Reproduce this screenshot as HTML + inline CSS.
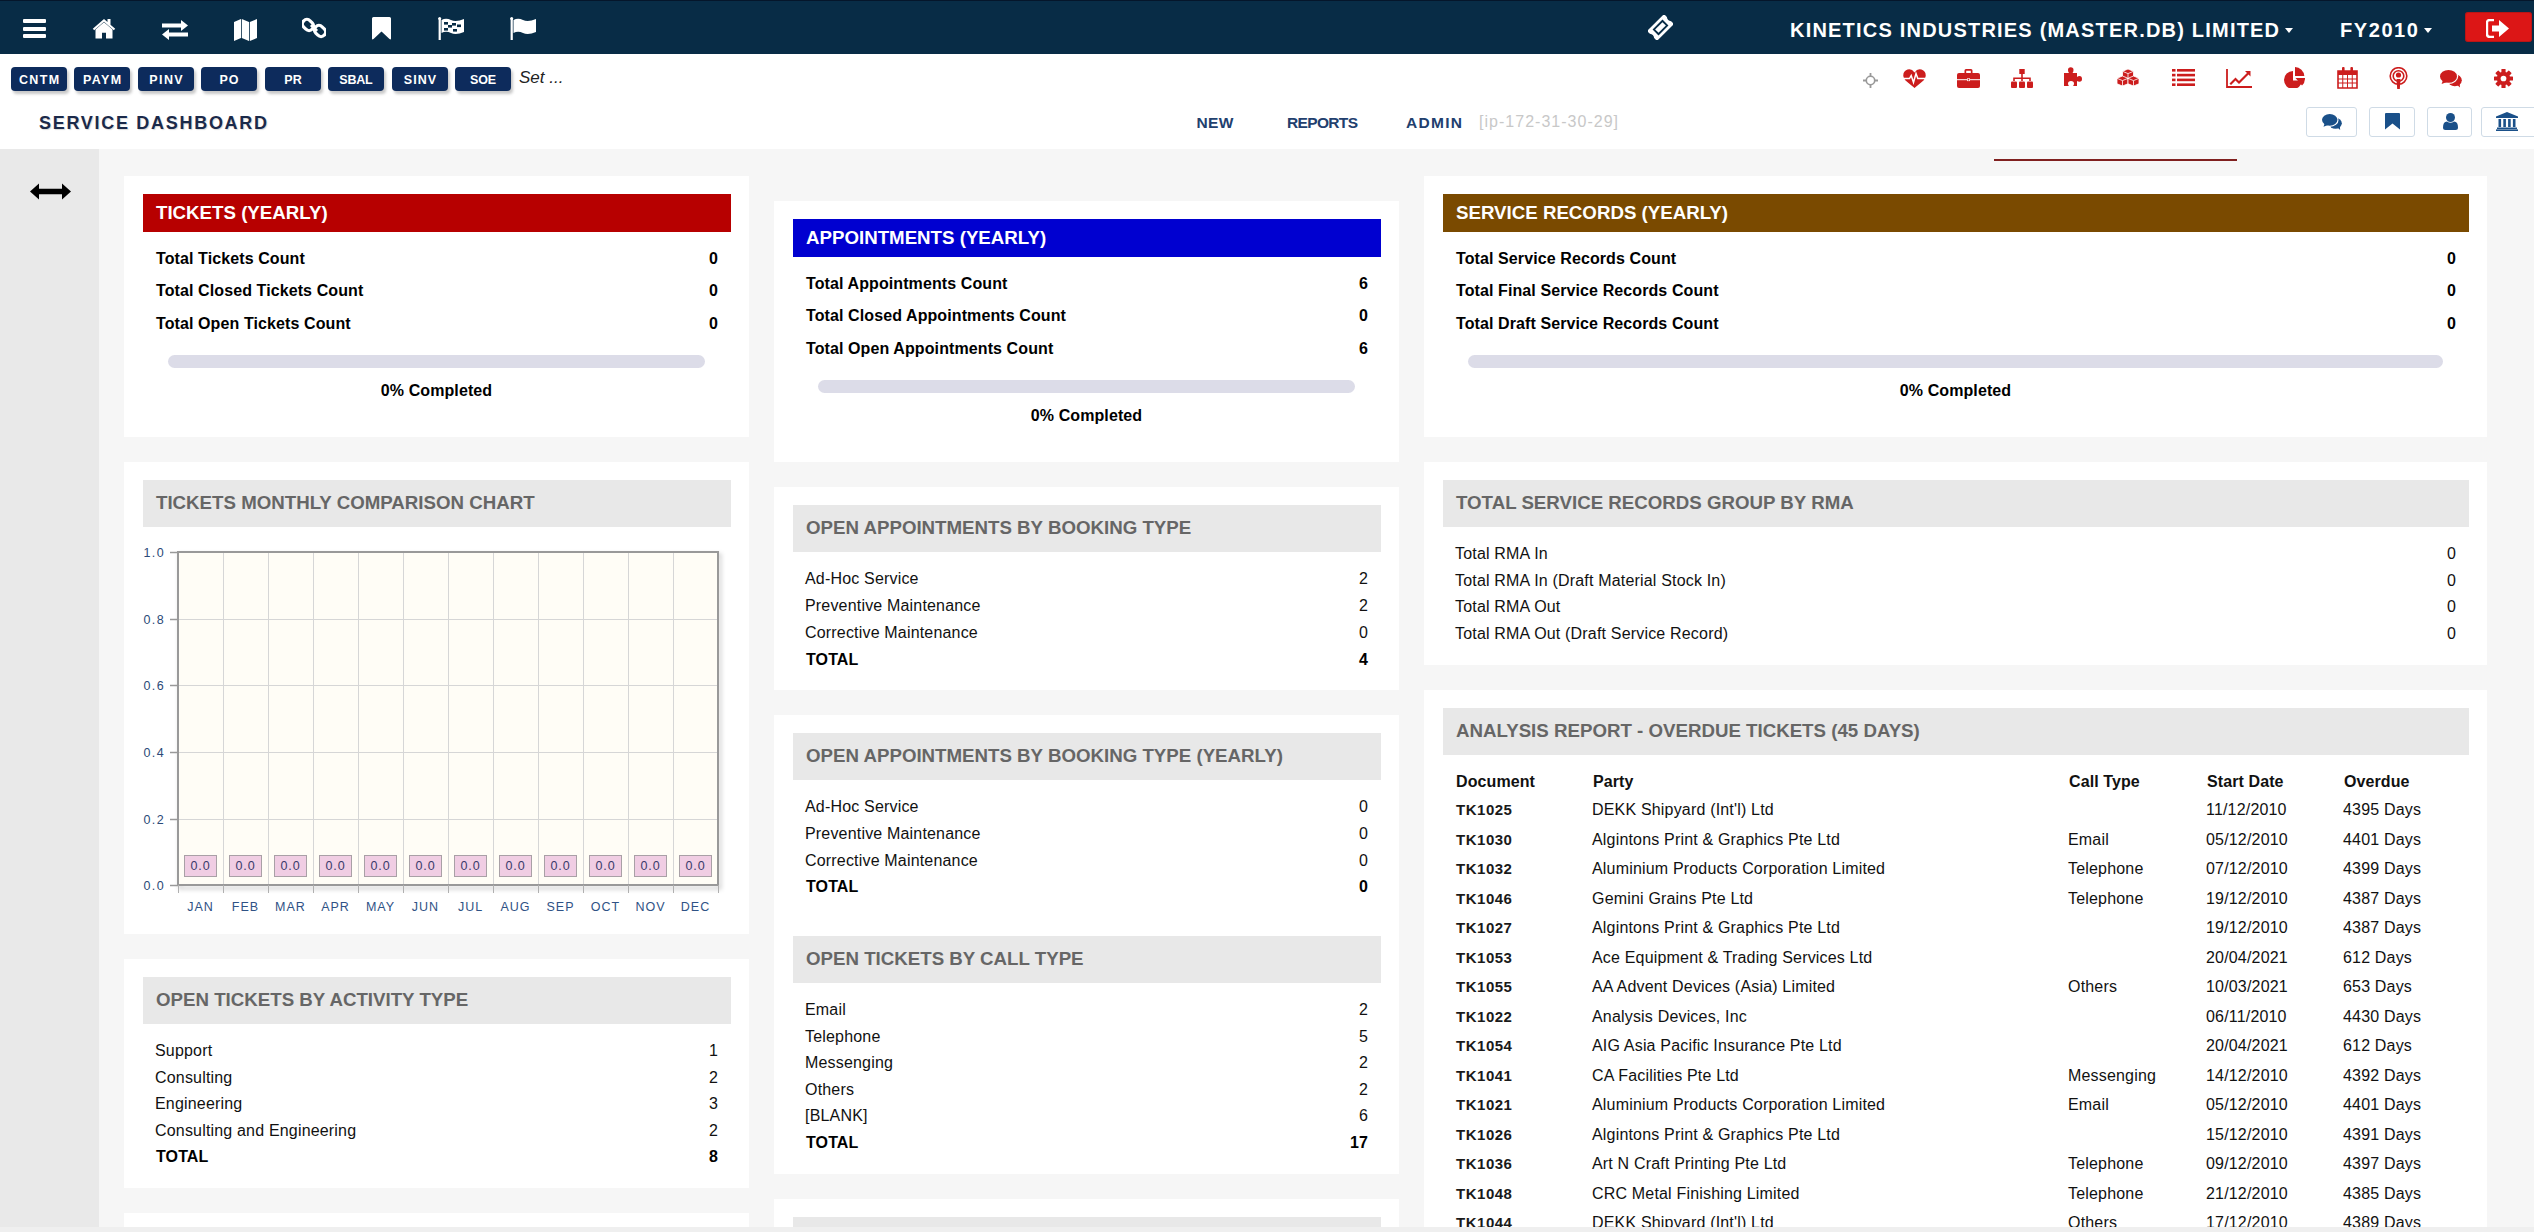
<!DOCTYPE html>
<html><head><meta charset="utf-8"><title>Service Dashboard</title>
<style>
html,body{margin:0;padding:0;width:2534px;height:1232px;overflow:hidden;background:#f5f5f5;}
body{position:relative;font-family:"Liberation Sans", sans-serif;}
.r{position:absolute;}
.t{position:absolute;white-space:nowrap;}
.btn{position:absolute;width:56px;height:24px;background:#0d2b5c;border-radius:4px;color:#fff;font-weight:bold;font-size:12.5px;line-height:26px;text-align:center;letter-spacing:0.8px;box-shadow:2px 3px 3px rgba(0,0,0,0.22);}
</style></head><body>
<div class="r" style="left:0px;top:0px;width:2534px;height:54px;background:#082c46;"></div>
<div class="r" style="left:0px;top:0px;width:2534px;height:1px;background:#05162b;"></div>
<div class="r" style="left:0px;top:54px;width:2534px;height:95px;background:#fff;"></div>
<div class="r" style="left:0px;top:149px;width:2534px;height:1083px;background:#f6f6f6;"></div>
<div class="r" style="left:0px;top:149px;width:99px;height:1083px;background:#e9e9e9;"></div>
<div class="r" style="left:23px;top:19px;width:23px;height:4px;background:#fff;border-radius:1px;"></div>
<div class="r" style="left:23px;top:26.5px;width:23px;height:4px;background:#fff;border-radius:1px;"></div>
<div class="r" style="left:23px;top:34px;width:23px;height:4px;background:#fff;border-radius:1px;"></div>
<svg class="r" style="left:92px;top:18px;" width="24" height="21" viewBox="0 0 24 21"><path d="M12 1 L0.8 10.8 L2.2 12.3 L12 3.7 L21.8 12.3 L23.2 10.8 L18.5 6.7 L18.5 1 L15.5 1 L15.5 4 Z" fill="#fff"/><path d="M3.5 11.5 L12 4.2 L20.5 11.5 L20.5 20.5 L14 20.5 L14 14.8 L10 14.8 L10 20.5 L3.5 20.5 Z" fill="#fff"/></svg>
<svg class="r" style="left:162px;top:20px;" width="26" height="20" viewBox="0 0 26 20"><path d="M0 3.5 H19 V0 L26 5.5 L19 11 V7.5 H0 Z" fill="#fff"/><path d="M26 12.5 H7 V9 L0 14.5 L7 20 V16.5 H26 Z" fill="#fff"/></svg>
<svg class="r" style="left:234px;top:19px;" width="23" height="22" viewBox="0 0 23 22"><path d="M0 3 L7 0 V19 L0 22 Z M7.8 0 L15 3 V22 L7.8 19 Z M15.8 3 L23 0 V19 L15.8 22 Z" fill="#fff"/></svg>
<svg class="r" style="left:302px;top:16px;" width="24" height="24" viewBox="0 0 24 24"><g fill="none" stroke="#fff" stroke-width="3.2"><rect x="1.5" y="3" width="9" height="12" rx="4.5" transform="rotate(-45 6 9)"/><rect x="13.5" y="9" width="9" height="12" rx="4.5" transform="rotate(-45 18 15)"/></g><path d="M9 9 L15 15" stroke="#fff" stroke-width="3"/></svg>
<svg class="r" style="left:372px;top:17px;" width="19" height="23" viewBox="0 0 19 23"><path d="M1.5 0 H17.5 Q19 0 19 1.5 V21.5 Q19 23 17.5 22 L9.5 14.5 L1.5 22 Q0 23 0 21.5 V1.5 Q0 0 1.5 0 Z" fill="#fff"/></svg>
<svg class="r" style="left:438px;top:17px;" width="26" height="23" viewBox="0 0 26 23"><rect x="0.6" y="1" width="2.2" height="22" fill="#fff"/><circle cx="1.7" cy="1.5" r="1.5" fill="#fff"/><path d="M3.5 3 Q8 0.5 13 3 Q18 5.5 26 2 V15 Q18 18.5 13 16 Q8 13.5 3.5 16 Z" fill="#fff"/><g fill="#082c46"><rect x="6" y="5" width="4" height="2.6"/><rect x="14" y="6" width="4" height="2.6"/><rect x="10" y="8" width="4" height="2.6"/><rect x="19" y="7.5" width="4" height="2.6"/><rect x="6" y="11" width="4" height="2.6"/><rect x="15" y="12" width="4" height="2.6"/></g></svg>
<svg class="r" style="left:510px;top:17px;" width="26" height="23" viewBox="0 0 26 23"><rect x="0.6" y="1" width="2.2" height="22" fill="#fff"/><circle cx="1.7" cy="1.5" r="1.5" fill="#fff"/><path d="M3.5 3 Q8 0.5 13 3 Q18 5.5 26 2 V15 Q18 18.5 13 16 Q8 13.5 3.5 16 Z" fill="#fff"/></svg>
<svg class="r" style="left:1648px;top:15px;" width="25" height="25" viewBox="0 0 25 25"><g transform="rotate(-45 12.5 12.5)"><path d="M0.5 5.5 H24.5 V9.5 Q22.3 12.5 24.5 15.5 V19.5 H0.5 V15.5 Q2.7 12.5 0.5 9.5 Z" fill="#fff"/><rect x="5.5" y="8.3" width="14" height="8.4" fill="#082c46"/><rect x="7.3" y="10.1" width="10.4" height="4.8" fill="#fff"/></g></svg>
<div class="t" style="top:19.87px;font-size:20px;line-height:20px;font-weight:bold;color:#fff;letter-spacing:1.203px;left:1790px;">KINETICS INDUSTRIES (MASTER.DB) LIMITED</div>
<svg class="r" style="left:2285px;top:28px;" width="8" height="5" viewBox="0 0 8 5"><path d="M0 0 H8 L4 5 Z" fill="#fff"/></svg>
<div class="t" style="top:19.87px;font-size:20px;line-height:20px;font-weight:bold;color:#fff;letter-spacing:1.58px;left:2340px;">FY2010</div>
<svg class="r" style="left:2424px;top:28px;" width="8" height="5" viewBox="0 0 8 5"><path d="M0 0 H8 L4 5 Z" fill="#fff"/></svg>
<div class="r" style="left:2465px;top:12px;width:67px;height:30px;background:#dc1616;border-radius:3px;box-shadow:0 0 0 1px rgba(120,20,20,0.35) inset;"></div>
<svg class="r" style="left:2486px;top:19px;" width="24" height="19" viewBox="0 0 24 19"><path d="M8 1 H4 Q1 1 1 4 V15 Q1 18 4 18 H8" fill="none" stroke="#fff" stroke-width="2.4"/><path d="M6 6.5 H13 V1 L23 9.5 L13 18 V12.5 H6 Z" fill="#fff"/></svg>
<div class="btn" style="left:11px;top:67px;letter-spacing:1.37px;text-indent:1.37px;">CNTM</div>
<div class="btn" style="left:74px;top:67px;letter-spacing:1.37px;text-indent:1.37px;">PAYM</div>
<div class="btn" style="left:138px;top:67px;letter-spacing:1.40px;text-indent:1.40px;">PINV</div>
<div class="btn" style="left:201px;top:67px;letter-spacing:1.10px;text-indent:1.10px;">PO</div>
<div class="btn" style="left:265px;top:67px;letter-spacing:0.00px;text-indent:0.00px;">PR</div>
<div class="btn" style="left:328px;top:67px;letter-spacing:-0.23px;text-indent:-0.23px;">SBAL</div>
<div class="btn" style="left:392px;top:67px;letter-spacing:1.03px;text-indent:1.03px;">SINV</div>
<div class="btn" style="left:455px;top:67px;letter-spacing:-0.10px;text-indent:-0.10px;">SOE</div>
<div class="t" style="top:68.61px;font-size:17px;line-height:17px;font-weight:normal;color:#222;left:519px;font-style:italic;">Set ...</div>
<svg class="r" style="left:1863px;top:73px;" width="15" height="15" viewBox="0 0 15 15"><circle cx="7.5" cy="7.5" r="4.2" fill="none" stroke="#999" stroke-width="1.6"/><path d="M7.5 0 V4 M7.5 11 V15 M0 7.5 H4 M11 7.5 H15" stroke="#999" stroke-width="1.8"/></svg>
<svg class="r" style="left:1903px;top:69px;" width="23" height="19" viewBox="0 0 23 19"><path d="M11.5 3.5 Q8.5 -1 4.5 0.5 Q0 2 0.3 7 Q0.6 9.5 2.5 11.5 L11.5 19 L20.5 11.5 Q22.4 9.5 22.7 7 Q23 2 18.5 0.5 Q14.5 -1 11.5 3.5 Z" fill="#cc1d1d"/><path d="M0 9.5 H6.5 L8.2 6.5 L10.5 13.5 L13 4.5 L14.8 9.5 H23" fill="none" stroke="#fff" stroke-width="1.5"/></svg>
<svg class="r" style="left:1957px;top:69px;" width="23" height="19" viewBox="0 0 23 19"><path d="M7.5 4 V1.5 Q7.5 0 9 0 H14 Q15.5 0 15.5 1.5 V4 H13.8 V1.8 H9.2 V4 Z" fill="#cc1d1d"/><rect x="0" y="4" width="23" height="15" rx="2" fill="#cc1d1d"/><rect x="0" y="10.2" width="23" height="1" fill="#fff"/><rect x="10" y="9.3" width="3" height="2.8" fill="#fff"/><rect x="10.8" y="9.9" width="1.4" height="1.6" fill="#cc1d1d"/></svg>
<svg class="r" style="left:2011px;top:69px;" width="22" height="19" viewBox="0 0 22 19"><rect x="8.3" y="0" width="5.4" height="5" fill="#cc1d1d"/><path d="M11 5 V8.5 M3 12 V9.3 H19 V12 M11 8.5 V12" stroke="#cc1d1d" stroke-width="1.6" fill="none"/><rect x="0" y="12.5" width="6" height="6.5" rx="1" fill="#cc1d1d"/><rect x="8" y="12.5" width="6" height="6.5" rx="1" fill="#cc1d1d"/><rect x="16" y="12.5" width="6" height="6.5" rx="1" fill="#cc1d1d"/></svg>
<svg class="r" style="left:2064px;top:67px;" width="21" height="19" viewBox="0 0 21 19"><path d="M0 6 H5 Q4 5 4 3 Q4 0.3 6.8 0.3 Q9.5 0.3 9.5 3 Q9.5 5 8.5 6 H13 V10 Q14 9 15.5 9 Q18 9 18 12 Q18 14.8 15.5 14.8 Q14 14.8 13 14 V19 H9 Q10 18 10 16.5 Q10 14 7 14 Q4 14 4 16.5 Q4 18 5 19 H0 Z" fill="#cc1d1d"/></svg>
<svg class="r" style="left:2117px;top:69px;" width="22" height="17" viewBox="0 0 22 17"><g fill="#cc1d1d" stroke="#fff" stroke-width="0.8"><path d="M11 0 L16.5 2.3 V7.8 L11 10 L5.5 7.8 V2.3 Z"/><path d="M5.5 7 L11 9.3 V14.8 L5.5 17 L0 14.8 V9.3 Z"/><path d="M16.5 7 L22 9.3 V14.8 L16.5 17 L11 14.8 V9.3 Z"/></g><g fill="none" stroke="#fff" stroke-width="0.8"><path d="M5.5 2.3 L11 4.6 L16.5 2.3 M11 4.6 V10"/><path d="M0 9.3 L5.5 11.6 L11 9.3 M5.5 11.6 V17"/><path d="M11 9.3 L16.5 11.6 L22 9.3 M16.5 11.6 V17"/></g></svg>
<svg class="r" style="left:2172px;top:69px;" width="23" height="17" viewBox="0 0 23 17"><g fill="#cc1d1d"><rect x="0" y="0" width="3.5" height="2.6"/><rect x="5" y="0" width="18" height="2.6"/><rect x="0" y="4.8" width="3.5" height="2.6"/><rect x="5" y="4.8" width="18" height="2.6"/><rect x="0" y="9.6" width="3.5" height="2.6"/><rect x="5" y="9.6" width="18" height="2.6"/><rect x="0" y="14.4" width="3.5" height="2.6"/><rect x="5" y="14.4" width="18" height="2.6"/></g></svg>
<svg class="r" style="left:2226px;top:69px;" width="26" height="19" viewBox="0 0 26 19"><path d="M1 0 V18 H26" fill="none" stroke="#cc1d1d" stroke-width="1.8"/><path d="M3.5 14.5 L9.5 8.5 L13 12 L21 4 L19 2 H24.5 V7.5 L22.5 5.5 L13 15 L9.5 11.5 L5 16 Z" fill="#cc1d1d"/></svg>
<svg class="r" style="left:2283px;top:67px;" width="22" height="21" viewBox="0 0 22 21"><path d="M10 4 A9 9 0 1 0 19 13.5 H10 Z" fill="#cc1d1d"/><path d="M12 0 A9.5 9.5 0 0 1 21.3 9 H12 Z" fill="#cc1d1d"/><path d="M12.5 11 H22 A9.8 9.8 0 0 1 19 18.5 Z" fill="#cc1d1d"/></svg>
<svg class="r" style="left:2337px;top:67px;" width="21" height="22" viewBox="0 0 21 22"><path d="M1 4 H20 V21 H1 Z" fill="none" stroke="#cc1d1d" stroke-width="1.6"/><rect x="1" y="4" width="19" height="4" fill="#cc1d1d"/><rect x="5" y="0" width="2.6" height="5" rx="1" fill="#cc1d1d"/><rect x="13.4" y="0" width="2.6" height="5" rx="1" fill="#cc1d1d"/><g stroke="#cc1d1d" stroke-width="1"><path d="M1 12 H20 M1 16 H20 M5.75 8 V21 M10.5 8 V21 M15.25 8 V21"/></g></svg>
<svg class="r" style="left:2389px;top:67px;" width="19" height="22" viewBox="0 0 19 22"><circle cx="9.5" cy="9" r="8.3" fill="none" stroke="#cc1d1d" stroke-width="1.6"/><circle cx="9.5" cy="9" r="5.3" fill="none" stroke="#cc1d1d" stroke-width="1.6"/><circle cx="9.5" cy="8" r="2.6" fill="#cc1d1d"/><path d="M7.5 12 H11.5 L10.8 22 H8.2 Z" fill="#cc1d1d"/></svg>
<svg class="r" style="left:2440px;top:70px;" width="22" height="17.5" viewBox="0 0 22 17.5"><ellipse cx="14.8" cy="10.2" rx="7" ry="6" fill="#cc1d1d"/><path d="M16 14 L20 17.5 L19.5 12 Z" fill="#cc1d1d"/><ellipse cx="8.5" cy="6.5" rx="9.7" ry="7.5" fill="#fff"/><ellipse cx="8.5" cy="6.4" rx="8.5" ry="6.4" fill="#cc1d1d"/><path d="M3 10 L1.6 14 L7.5 11.8 Z" fill="#cc1d1d"/></svg>
<svg class="r" style="left:2494px;top:69px;" width="19" height="19" viewBox="0 0 20 20"><g transform="translate(10 10)" fill="#cc1d1d"><circle r="7"/><rect x="-2.2" y="-10" width="4.4" height="5" rx="0.6" transform="rotate(0)"/><rect x="-2.2" y="-10" width="4.4" height="5" rx="0.6" transform="rotate(45)"/><rect x="-2.2" y="-10" width="4.4" height="5" rx="0.6" transform="rotate(90)"/><rect x="-2.2" y="-10" width="4.4" height="5" rx="0.6" transform="rotate(135)"/><rect x="-2.2" y="-10" width="4.4" height="5" rx="0.6" transform="rotate(180)"/><rect x="-2.2" y="-10" width="4.4" height="5" rx="0.6" transform="rotate(225)"/><rect x="-2.2" y="-10" width="4.4" height="5" rx="0.6" transform="rotate(270)"/><rect x="-2.2" y="-10" width="4.4" height="5" rx="0.6" transform="rotate(315)"/></g><circle cx="10" cy="10" r="3" fill="#fff"/></svg>
<div class="t" style="top:114.26px;font-size:18px;line-height:18px;font-weight:bold;color:#1b2a4a;letter-spacing:1.706px;left:39px;text-shadow:1px 1px 1px rgba(0,0,0,0.15);">SERVICE DASHBOARD</div>
<div class="t" style="top:114.88px;font-size:15.5px;line-height:15.5px;font-weight:bold;color:#22406e;letter-spacing:0.4px;left:1196.5px;">NEW</div>
<div class="t" style="top:114.88px;font-size:15.5px;line-height:15.5px;font-weight:bold;color:#22406e;letter-spacing:-0.65px;left:1287px;">REPORTS</div>
<div class="t" style="top:114.88px;font-size:15.5px;line-height:15.5px;font-weight:bold;color:#22406e;letter-spacing:1.3px;left:1406px;">ADMIN</div>
<div class="t" style="top:114.46px;font-size:16px;line-height:16px;font-weight:normal;color:#c8c8c8;letter-spacing:1.019px;left:1479px;">[ip-172-31-30-29]</div>
<div class="r" style="left:2306px;top:107px;width:51px;height:30px;background:#fff;border:1px solid #cfdbe6;border-radius:3px;box-sizing:border-box;"></div>
<div class="r" style="left:2369px;top:107px;width:46px;height:30px;background:#fff;border:1px solid #cfdbe6;border-radius:3px;box-sizing:border-box;"></div>
<div class="r" style="left:2427px;top:107px;width:45px;height:30px;background:#fff;border:1px solid #cfdbe6;border-radius:3px;box-sizing:border-box;"></div>
<div class="r" style="left:2481px;top:107px;width:60px;height:30px;background:#fff;border:1px solid #cfdbe6;border-radius:3px;box-sizing:border-box;"></div>
<svg class="r" style="left:2322px;top:114px;" width="20" height="16" viewBox="0 0 22 17.5"><ellipse cx="14.8" cy="10.2" rx="7" ry="6" fill="#1a5089"/><path d="M16 14 L20 17.5 L19.5 12 Z" fill="#1a5089"/><ellipse cx="8.5" cy="6.5" rx="9.7" ry="7.5" fill="#fff"/><ellipse cx="8.5" cy="6.4" rx="8.5" ry="6.4" fill="#1a5089"/><path d="M3 10 L1.6 14 L7.5 11.8 Z" fill="#1a5089"/></svg>
<svg class="r" style="left:2385px;top:113px;" width="15" height="17" viewBox="0 0 15 17"><path d="M1 0 H14 Q15 0 15 1 V16.5 L7.5 10.5 L0 16.5 V1 Q0 0 1 0 Z" fill="#1a5089"/></svg>
<svg class="r" style="left:2443px;top:113px;" width="15" height="17" viewBox="0 0 15 17"><circle cx="7.5" cy="4.5" r="4.5" fill="#1a5089"/><path d="M0 14.5 Q0 8.5 4 8.5 Q7.5 11 11 8.5 Q15 8.5 15 14.5 Q15 17 12.5 17 H2.5 Q0 17 0 14.5 Z" fill="#1a5089"/></svg>
<svg class="r" style="left:2496px;top:112px;" width="22" height="19" viewBox="0 0 22 19"><path d="M11 0 L22 4.5 V6 H0 V4.5 Z" fill="#1a5089"/><g fill="#1a5089"><rect x="2.5" y="7" width="2.6" height="8"/><rect x="7.3" y="7" width="2.6" height="8"/><rect x="12.1" y="7" width="2.6" height="8"/><rect x="16.9" y="7" width="2.6" height="8"/><rect x="1" y="15.5" width="20" height="1.6"/><rect x="0" y="17.4" width="22" height="1.6"/></g></svg>
<div class="r" style="left:1994px;top:158.5px;width:243px;height:2px;background:#80201f;"></div>
<svg class="r" style="left:30px;top:183px;" width="41" height="17" viewBox="0 0 41 17"><path d="M0 8.5 L9 0.5 V5.7 H32 V0.5 L41 8.5 L32 16.5 V11.3 H9 V16.5 Z" fill="#000"/></svg>
<div class="r" style="left:124px;top:176px;width:625px;height:261px;background:#fff;"></div>
<div class="r" style="left:143px;top:194px;width:588px;height:38px;background:#b70000;"></div>
<div class="t" style="top:204.17px;font-size:18.7px;line-height:18.7px;font-weight:bold;color:#fff;left:156px;">TICKETS (YEARLY)</div>
<div class="t" style="top:251.46px;font-size:16px;line-height:16px;font-weight:bold;color:#000;letter-spacing:0.1px;left:156px;">Total Tickets Count</div>
<div class="t" style="top:251.46px;font-size:16px;line-height:16px;font-weight:bold;color:#000;letter-spacing:0.1px;right:1816px;">0</div>
<div class="t" style="top:283.46px;font-size:16px;line-height:16px;font-weight:bold;color:#000;letter-spacing:0.1px;left:156px;">Total Closed Tickets Count</div>
<div class="t" style="top:283.46px;font-size:16px;line-height:16px;font-weight:bold;color:#000;letter-spacing:0.1px;right:1816px;">0</div>
<div class="t" style="top:316.46px;font-size:16px;line-height:16px;font-weight:bold;color:#000;letter-spacing:0.1px;left:156px;">Total Open Tickets Count</div>
<div class="t" style="top:316.46px;font-size:16px;line-height:16px;font-weight:bold;color:#000;letter-spacing:0.1px;right:1816px;">0</div>
<div class="r" style="left:168px;top:355px;width:537px;height:13px;background:#dcdce8;border-radius:7px;"></div>
<div class="t" style="top:383.46px;font-size:16px;line-height:16px;font-weight:bold;color:#000;letter-spacing:0.1px;left:36.5px;width:800px;text-align:center;">0% Completed</div>
<div class="r" style="left:774px;top:201px;width:625px;height:261px;background:#fff;"></div>
<div class="r" style="left:793px;top:219px;width:588px;height:38px;background:#0000d0;"></div>
<div class="t" style="top:229.17px;font-size:18.7px;line-height:18.7px;font-weight:bold;color:#fff;left:806px;">APPOINTMENTS (YEARLY)</div>
<div class="t" style="top:276.46px;font-size:16px;line-height:16px;font-weight:bold;color:#000;letter-spacing:0.1px;left:806px;">Total Appointments Count</div>
<div class="t" style="top:276.46px;font-size:16px;line-height:16px;font-weight:bold;color:#000;letter-spacing:0.1px;right:1166px;">6</div>
<div class="t" style="top:308.46px;font-size:16px;line-height:16px;font-weight:bold;color:#000;letter-spacing:0.1px;left:806px;">Total Closed Appointments Count</div>
<div class="t" style="top:308.46px;font-size:16px;line-height:16px;font-weight:bold;color:#000;letter-spacing:0.1px;right:1166px;">0</div>
<div class="t" style="top:341.46px;font-size:16px;line-height:16px;font-weight:bold;color:#000;letter-spacing:0.1px;left:806px;">Total Open Appointments Count</div>
<div class="t" style="top:341.46px;font-size:16px;line-height:16px;font-weight:bold;color:#000;letter-spacing:0.1px;right:1166px;">6</div>
<div class="r" style="left:818px;top:380px;width:537px;height:13px;background:#dcdce8;border-radius:7px;"></div>
<div class="t" style="top:408.46px;font-size:16px;line-height:16px;font-weight:bold;color:#000;letter-spacing:0.1px;left:686.5px;width:800px;text-align:center;">0% Completed</div>
<div class="r" style="left:1424px;top:176px;width:1063px;height:261px;background:#fff;"></div>
<div class="r" style="left:1443px;top:194px;width:1026px;height:38px;background:#7a4a00;"></div>
<div class="t" style="top:204.17px;font-size:18.7px;line-height:18.7px;font-weight:bold;color:#fff;left:1456px;">SERVICE RECORDS (YEARLY)</div>
<div class="t" style="top:251.46px;font-size:16px;line-height:16px;font-weight:bold;color:#000;letter-spacing:0.1px;left:1456px;">Total Service Records Count</div>
<div class="t" style="top:251.46px;font-size:16px;line-height:16px;font-weight:bold;color:#000;letter-spacing:0.1px;right:78px;">0</div>
<div class="t" style="top:283.46px;font-size:16px;line-height:16px;font-weight:bold;color:#000;letter-spacing:0.1px;left:1456px;">Total Final Service Records Count</div>
<div class="t" style="top:283.46px;font-size:16px;line-height:16px;font-weight:bold;color:#000;letter-spacing:0.1px;right:78px;">0</div>
<div class="t" style="top:316.46px;font-size:16px;line-height:16px;font-weight:bold;color:#000;letter-spacing:0.1px;left:1456px;">Total Draft Service Records Count</div>
<div class="t" style="top:316.46px;font-size:16px;line-height:16px;font-weight:bold;color:#000;letter-spacing:0.1px;right:78px;">0</div>
<div class="r" style="left:1468px;top:355px;width:975px;height:13px;background:#dcdce8;border-radius:7px;"></div>
<div class="t" style="top:383.46px;font-size:16px;line-height:16px;font-weight:bold;color:#000;letter-spacing:0.1px;left:1555.5px;width:800px;text-align:center;">0% Completed</div>
<div class="r" style="left:124px;top:462px;width:625px;height:472px;background:#fff;"></div>
<div class="r" style="left:143px;top:480px;width:588px;height:47px;background:#e8e8e8;"></div>
<div class="t" style="top:494.17px;font-size:18.7px;line-height:18.7px;font-weight:bold;color:#666;left:156px;">TICKETS MONTHLY COMPARISON CHART</div>
<svg class="r" style="left:130px;top:540px" width="600" height="380"><defs><filter id="sh" x="-5%" y="-5%" width="115%" height="115%"><feGaussianBlur stdDeviation="2"/></filter></defs><rect x="50" y="15" width="540" height="333" fill="none" stroke="#000" stroke-opacity="0.18" stroke-width="3" filter="url(#sh)"/><rect x="48" y="12" width="540" height="333" fill="#fffdf6"/><line x1="93.5" y1="12" x2="93.5" y2="345" stroke="#d6d6d6" stroke-width="1"/><line x1="138.5" y1="12" x2="138.5" y2="345" stroke="#d6d6d6" stroke-width="1"/><line x1="183.5" y1="12" x2="183.5" y2="345" stroke="#d6d6d6" stroke-width="1"/><line x1="228.5" y1="12" x2="228.5" y2="345" stroke="#d6d6d6" stroke-width="1"/><line x1="273.5" y1="12" x2="273.5" y2="345" stroke="#d6d6d6" stroke-width="1"/><line x1="318.5" y1="12" x2="318.5" y2="345" stroke="#d6d6d6" stroke-width="1"/><line x1="363.5" y1="12" x2="363.5" y2="345" stroke="#d6d6d6" stroke-width="1"/><line x1="408.5" y1="12" x2="408.5" y2="345" stroke="#d6d6d6" stroke-width="1"/><line x1="453.5" y1="12" x2="453.5" y2="345" stroke="#d6d6d6" stroke-width="1"/><line x1="498.5" y1="12" x2="498.5" y2="345" stroke="#d6d6d6" stroke-width="1"/><line x1="543.5" y1="12" x2="543.5" y2="345" stroke="#d6d6d6" stroke-width="1"/><line x1="48" y1="79.5" x2="588" y2="79.5" stroke="#d6d6d6" stroke-width="1"/><line x1="48" y1="145.5" x2="588" y2="145.5" stroke="#d6d6d6" stroke-width="1"/><line x1="48" y1="212.5" x2="588" y2="212.5" stroke="#d6d6d6" stroke-width="1"/><line x1="48" y1="279.5" x2="588" y2="279.5" stroke="#d6d6d6" stroke-width="1"/><rect x="48" y="12" width="540" height="333" fill="none" stroke="#999" stroke-width="2"/><line x1="40" y1="12.5" x2="48" y2="12.5" stroke="#999" stroke-width="1.5"/><line x1="40" y1="79.5" x2="48" y2="79.5" stroke="#999" stroke-width="1.5"/><line x1="40" y1="145.5" x2="48" y2="145.5" stroke="#999" stroke-width="1.5"/><line x1="40" y1="212.5" x2="48" y2="212.5" stroke="#999" stroke-width="1.5"/><line x1="40" y1="279.5" x2="48" y2="279.5" stroke="#999" stroke-width="1.5"/><line x1="40" y1="345.5" x2="48" y2="345.5" stroke="#999" stroke-width="1.5"/><line x1="48.5" y1="345" x2="48.5" y2="353" stroke="#b0b0b0" stroke-width="1"/><line x1="93.5" y1="345" x2="93.5" y2="353" stroke="#b0b0b0" stroke-width="1"/><line x1="138.5" y1="345" x2="138.5" y2="353" stroke="#b0b0b0" stroke-width="1"/><line x1="183.5" y1="345" x2="183.5" y2="353" stroke="#b0b0b0" stroke-width="1"/><line x1="228.5" y1="345" x2="228.5" y2="353" stroke="#b0b0b0" stroke-width="1"/><line x1="273.5" y1="345" x2="273.5" y2="353" stroke="#b0b0b0" stroke-width="1"/><line x1="318.5" y1="345" x2="318.5" y2="353" stroke="#b0b0b0" stroke-width="1"/><line x1="363.5" y1="345" x2="363.5" y2="353" stroke="#b0b0b0" stroke-width="1"/><line x1="408.5" y1="345" x2="408.5" y2="353" stroke="#b0b0b0" stroke-width="1"/><line x1="453.5" y1="345" x2="453.5" y2="353" stroke="#b0b0b0" stroke-width="1"/><line x1="498.5" y1="345" x2="498.5" y2="353" stroke="#b0b0b0" stroke-width="1"/><line x1="543.5" y1="345" x2="543.5" y2="353" stroke="#b0b0b0" stroke-width="1"/><line x1="588.5" y1="345" x2="588.5" y2="353" stroke="#b0b0b0" stroke-width="1"/><rect x="54.5" y="315.5" width="32" height="21" fill="#f0cde3" stroke="#a9a0a6" stroke-width="1"/><rect x="99.5" y="315.5" width="32" height="21" fill="#f0cde3" stroke="#a9a0a6" stroke-width="1"/><rect x="144.5" y="315.5" width="32" height="21" fill="#f0cde3" stroke="#a9a0a6" stroke-width="1"/><rect x="189.5" y="315.5" width="32" height="21" fill="#f0cde3" stroke="#a9a0a6" stroke-width="1"/><rect x="234.5" y="315.5" width="32" height="21" fill="#f0cde3" stroke="#a9a0a6" stroke-width="1"/><rect x="279.5" y="315.5" width="32" height="21" fill="#f0cde3" stroke="#a9a0a6" stroke-width="1"/><rect x="324.5" y="315.5" width="32" height="21" fill="#f0cde3" stroke="#a9a0a6" stroke-width="1"/><rect x="369.5" y="315.5" width="32" height="21" fill="#f0cde3" stroke="#a9a0a6" stroke-width="1"/><rect x="414.5" y="315.5" width="32" height="21" fill="#f0cde3" stroke="#a9a0a6" stroke-width="1"/><rect x="459.5" y="315.5" width="32" height="21" fill="#f0cde3" stroke="#a9a0a6" stroke-width="1"/><rect x="504.5" y="315.5" width="32" height="21" fill="#f0cde3" stroke="#a9a0a6" stroke-width="1"/><rect x="549.5" y="315.5" width="32" height="21" fill="#f0cde3" stroke="#a9a0a6" stroke-width="1"/></svg>
<div class="t" style="top:859.92px;font-size:12.5px;line-height:12.5px;font-weight:normal;color:#3b3b6b;letter-spacing:0.8px;left:-199.5px;width:800px;text-align:center;">0.0</div>
<div class="t" style="top:859.92px;font-size:12.5px;line-height:12.5px;font-weight:normal;color:#3b3b6b;letter-spacing:0.8px;left:-154.5px;width:800px;text-align:center;">0.0</div>
<div class="t" style="top:859.92px;font-size:12.5px;line-height:12.5px;font-weight:normal;color:#3b3b6b;letter-spacing:0.8px;left:-109.5px;width:800px;text-align:center;">0.0</div>
<div class="t" style="top:859.92px;font-size:12.5px;line-height:12.5px;font-weight:normal;color:#3b3b6b;letter-spacing:0.8px;left:-64.5px;width:800px;text-align:center;">0.0</div>
<div class="t" style="top:859.92px;font-size:12.5px;line-height:12.5px;font-weight:normal;color:#3b3b6b;letter-spacing:0.8px;left:-19.5px;width:800px;text-align:center;">0.0</div>
<div class="t" style="top:859.92px;font-size:12.5px;line-height:12.5px;font-weight:normal;color:#3b3b6b;letter-spacing:0.8px;left:25.5px;width:800px;text-align:center;">0.0</div>
<div class="t" style="top:859.92px;font-size:12.5px;line-height:12.5px;font-weight:normal;color:#3b3b6b;letter-spacing:0.8px;left:70.5px;width:800px;text-align:center;">0.0</div>
<div class="t" style="top:859.92px;font-size:12.5px;line-height:12.5px;font-weight:normal;color:#3b3b6b;letter-spacing:0.8px;left:115.5px;width:800px;text-align:center;">0.0</div>
<div class="t" style="top:859.92px;font-size:12.5px;line-height:12.5px;font-weight:normal;color:#3b3b6b;letter-spacing:0.8px;left:160.5px;width:800px;text-align:center;">0.0</div>
<div class="t" style="top:859.92px;font-size:12.5px;line-height:12.5px;font-weight:normal;color:#3b3b6b;letter-spacing:0.8px;left:205.5px;width:800px;text-align:center;">0.0</div>
<div class="t" style="top:859.92px;font-size:12.5px;line-height:12.5px;font-weight:normal;color:#3b3b6b;letter-spacing:0.8px;left:250.5px;width:800px;text-align:center;">0.0</div>
<div class="t" style="top:859.92px;font-size:12.5px;line-height:12.5px;font-weight:normal;color:#3b3b6b;letter-spacing:0.8px;left:295.5px;width:800px;text-align:center;">0.0</div>
<div class="t" style="top:547.42px;font-size:12.5px;line-height:12.5px;font-weight:normal;color:#2c4a78;letter-spacing:1.4px;right:2369px;">1.0</div>
<div class="t" style="top:614.42px;font-size:12.5px;line-height:12.5px;font-weight:normal;color:#2c4a78;letter-spacing:1.4px;right:2369px;">0.8</div>
<div class="t" style="top:680.42px;font-size:12.5px;line-height:12.5px;font-weight:normal;color:#2c4a78;letter-spacing:1.4px;right:2369px;">0.6</div>
<div class="t" style="top:747.42px;font-size:12.5px;line-height:12.5px;font-weight:normal;color:#2c4a78;letter-spacing:1.4px;right:2369px;">0.4</div>
<div class="t" style="top:814.42px;font-size:12.5px;line-height:12.5px;font-weight:normal;color:#2c4a78;letter-spacing:1.4px;right:2369px;">0.2</div>
<div class="t" style="top:880.42px;font-size:12.5px;line-height:12.5px;font-weight:normal;color:#2c4a78;letter-spacing:1.4px;right:2369px;">0.0</div>
<div class="t" style="top:901.42px;font-size:12.5px;line-height:12.5px;font-weight:normal;color:#2f5285;letter-spacing:1.0px;left:-199.5px;width:800px;text-align:center;">JAN</div>
<div class="t" style="top:901.42px;font-size:12.5px;line-height:12.5px;font-weight:normal;color:#2f5285;letter-spacing:1.0px;left:-154.5px;width:800px;text-align:center;">FEB</div>
<div class="t" style="top:901.42px;font-size:12.5px;line-height:12.5px;font-weight:normal;color:#2f5285;letter-spacing:1.0px;left:-109.5px;width:800px;text-align:center;">MAR</div>
<div class="t" style="top:901.42px;font-size:12.5px;line-height:12.5px;font-weight:normal;color:#2f5285;letter-spacing:1.0px;left:-64.5px;width:800px;text-align:center;">APR</div>
<div class="t" style="top:901.42px;font-size:12.5px;line-height:12.5px;font-weight:normal;color:#2f5285;letter-spacing:1.0px;left:-19.5px;width:800px;text-align:center;">MAY</div>
<div class="t" style="top:901.42px;font-size:12.5px;line-height:12.5px;font-weight:normal;color:#2f5285;letter-spacing:1.0px;left:25.5px;width:800px;text-align:center;">JUN</div>
<div class="t" style="top:901.42px;font-size:12.5px;line-height:12.5px;font-weight:normal;color:#2f5285;letter-spacing:1.0px;left:70.5px;width:800px;text-align:center;">JUL</div>
<div class="t" style="top:901.42px;font-size:12.5px;line-height:12.5px;font-weight:normal;color:#2f5285;letter-spacing:1.0px;left:115.5px;width:800px;text-align:center;">AUG</div>
<div class="t" style="top:901.42px;font-size:12.5px;line-height:12.5px;font-weight:normal;color:#2f5285;letter-spacing:1.0px;left:160.5px;width:800px;text-align:center;">SEP</div>
<div class="t" style="top:901.42px;font-size:12.5px;line-height:12.5px;font-weight:normal;color:#2f5285;letter-spacing:1.0px;left:205.5px;width:800px;text-align:center;">OCT</div>
<div class="t" style="top:901.42px;font-size:12.5px;line-height:12.5px;font-weight:normal;color:#2f5285;letter-spacing:1.0px;left:250.5px;width:800px;text-align:center;">NOV</div>
<div class="t" style="top:901.42px;font-size:12.5px;line-height:12.5px;font-weight:normal;color:#2f5285;letter-spacing:1.0px;left:295.5px;width:800px;text-align:center;">DEC</div>
<div class="r" style="left:124px;top:959px;width:625px;height:229px;background:#fff;"></div>
<div class="r" style="left:143px;top:977px;width:588px;height:47px;background:#e8e8e8;"></div>
<div class="t" style="top:991.17px;font-size:18.7px;line-height:18.7px;font-weight:bold;color:#666;left:156px;">OPEN TICKETS BY ACTIVITY TYPE</div>
<div class="t" style="top:1043.46px;font-size:16px;line-height:16px;font-weight:normal;color:#111;letter-spacing:0.18px;left:155px;">Support</div>
<div class="t" style="top:1043.46px;font-size:16px;line-height:16px;font-weight:normal;color:#111;letter-spacing:0.18px;right:1816px;">1</div>
<div class="t" style="top:1069.96px;font-size:16px;line-height:16px;font-weight:normal;color:#111;letter-spacing:0.18px;left:155px;">Consulting</div>
<div class="t" style="top:1069.96px;font-size:16px;line-height:16px;font-weight:normal;color:#111;letter-spacing:0.18px;right:1816px;">2</div>
<div class="t" style="top:1096.46px;font-size:16px;line-height:16px;font-weight:normal;color:#111;letter-spacing:0.18px;left:155px;">Engineering</div>
<div class="t" style="top:1096.46px;font-size:16px;line-height:16px;font-weight:normal;color:#111;letter-spacing:0.18px;right:1816px;">3</div>
<div class="t" style="top:1122.96px;font-size:16px;line-height:16px;font-weight:normal;color:#111;letter-spacing:0.18px;left:155px;">Consulting and Engineering</div>
<div class="t" style="top:1122.96px;font-size:16px;line-height:16px;font-weight:normal;color:#111;letter-spacing:0.18px;right:1816px;">2</div>
<div class="t" style="top:1149.46px;font-size:16px;line-height:16px;font-weight:bold;color:#000;letter-spacing:0.1px;left:156px;">TOTAL</div>
<div class="t" style="top:1149.46px;font-size:16px;line-height:16px;font-weight:bold;color:#000;letter-spacing:0.1px;right:1816px;">8</div>
<div class="r" style="left:124px;top:1213px;width:625px;height:20px;background:#fff;"></div>
<div class="r" style="left:774px;top:487px;width:625px;height:203px;background:#fff;"></div>
<div class="r" style="left:793px;top:505px;width:588px;height:47px;background:#e8e8e8;"></div>
<div class="t" style="top:519.17px;font-size:18.7px;line-height:18.7px;font-weight:bold;color:#666;left:806px;">OPEN APPOINTMENTS BY BOOKING TYPE</div>
<div class="t" style="top:571.46px;font-size:16px;line-height:16px;font-weight:normal;color:#111;letter-spacing:0.18px;left:805px;">Ad-Hoc Service</div>
<div class="t" style="top:571.46px;font-size:16px;line-height:16px;font-weight:normal;color:#111;letter-spacing:0.18px;right:1166px;">2</div>
<div class="t" style="top:598.16px;font-size:16px;line-height:16px;font-weight:normal;color:#111;letter-spacing:0.18px;left:805px;">Preventive Maintenance</div>
<div class="t" style="top:598.16px;font-size:16px;line-height:16px;font-weight:normal;color:#111;letter-spacing:0.18px;right:1166px;">2</div>
<div class="t" style="top:624.86px;font-size:16px;line-height:16px;font-weight:normal;color:#111;letter-spacing:0.18px;left:805px;">Corrective Maintenance</div>
<div class="t" style="top:624.86px;font-size:16px;line-height:16px;font-weight:normal;color:#111;letter-spacing:0.18px;right:1166px;">0</div>
<div class="t" style="top:651.56px;font-size:16px;line-height:16px;font-weight:bold;color:#000;letter-spacing:0.1px;left:806px;">TOTAL</div>
<div class="t" style="top:651.56px;font-size:16px;line-height:16px;font-weight:bold;color:#000;letter-spacing:0.1px;right:1166px;">4</div>
<div class="r" style="left:774px;top:715px;width:625px;height:459px;background:#fff;"></div>
<div class="r" style="left:793px;top:733px;width:588px;height:47px;background:#e8e8e8;"></div>
<div class="t" style="top:747.17px;font-size:18.7px;line-height:18.7px;font-weight:bold;color:#666;left:806px;">OPEN APPOINTMENTS BY BOOKING TYPE (YEARLY)</div>
<div class="t" style="top:799.46px;font-size:16px;line-height:16px;font-weight:normal;color:#111;letter-spacing:0.18px;left:805px;">Ad-Hoc Service</div>
<div class="t" style="top:799.46px;font-size:16px;line-height:16px;font-weight:normal;color:#111;letter-spacing:0.18px;right:1166px;">0</div>
<div class="t" style="top:826.06px;font-size:16px;line-height:16px;font-weight:normal;color:#111;letter-spacing:0.18px;left:805px;">Preventive Maintenance</div>
<div class="t" style="top:826.06px;font-size:16px;line-height:16px;font-weight:normal;color:#111;letter-spacing:0.18px;right:1166px;">0</div>
<div class="t" style="top:852.66px;font-size:16px;line-height:16px;font-weight:normal;color:#111;letter-spacing:0.18px;left:805px;">Corrective Maintenance</div>
<div class="t" style="top:852.66px;font-size:16px;line-height:16px;font-weight:normal;color:#111;letter-spacing:0.18px;right:1166px;">0</div>
<div class="t" style="top:879.26px;font-size:16px;line-height:16px;font-weight:bold;color:#000;letter-spacing:0.1px;left:806px;">TOTAL</div>
<div class="t" style="top:879.26px;font-size:16px;line-height:16px;font-weight:bold;color:#000;letter-spacing:0.1px;right:1166px;">0</div>
<div class="r" style="left:793px;top:936px;width:588px;height:47px;background:#e8e8e8;"></div>
<div class="t" style="top:950.17px;font-size:18.7px;line-height:18.7px;font-weight:bold;color:#666;left:806px;">OPEN TICKETS BY CALL TYPE</div>
<div class="t" style="top:1001.96px;font-size:16px;line-height:16px;font-weight:normal;color:#111;letter-spacing:0.18px;left:805px;">Email</div>
<div class="t" style="top:1001.96px;font-size:16px;line-height:16px;font-weight:normal;color:#111;letter-spacing:0.18px;right:1166px;">2</div>
<div class="t" style="top:1028.56px;font-size:16px;line-height:16px;font-weight:normal;color:#111;letter-spacing:0.18px;left:805px;">Telephone</div>
<div class="t" style="top:1028.56px;font-size:16px;line-height:16px;font-weight:normal;color:#111;letter-spacing:0.18px;right:1166px;">5</div>
<div class="t" style="top:1055.16px;font-size:16px;line-height:16px;font-weight:normal;color:#111;letter-spacing:0.18px;left:805px;">Messenging</div>
<div class="t" style="top:1055.16px;font-size:16px;line-height:16px;font-weight:normal;color:#111;letter-spacing:0.18px;right:1166px;">2</div>
<div class="t" style="top:1081.76px;font-size:16px;line-height:16px;font-weight:normal;color:#111;letter-spacing:0.18px;left:805px;">Others</div>
<div class="t" style="top:1081.76px;font-size:16px;line-height:16px;font-weight:normal;color:#111;letter-spacing:0.18px;right:1166px;">2</div>
<div class="t" style="top:1108.36px;font-size:16px;line-height:16px;font-weight:normal;color:#111;letter-spacing:0.18px;left:805px;">[BLANK]</div>
<div class="t" style="top:1108.36px;font-size:16px;line-height:16px;font-weight:normal;color:#111;letter-spacing:0.18px;right:1166px;">6</div>
<div class="t" style="top:1134.96px;font-size:16px;line-height:16px;font-weight:bold;color:#000;letter-spacing:0.1px;left:806px;">TOTAL</div>
<div class="t" style="top:1134.96px;font-size:16px;line-height:16px;font-weight:bold;color:#000;letter-spacing:0.1px;right:1166px;">17</div>
<div class="r" style="left:774px;top:1199px;width:625px;height:40px;background:#fff;"></div>
<div class="r" style="left:793px;top:1217px;width:588px;height:20px;background:#e8e8e8;"></div>
<div class="r" style="left:1424px;top:462px;width:1063px;height:203px;background:#fff;"></div>
<div class="r" style="left:1443px;top:480px;width:1026px;height:47px;background:#e8e8e8;"></div>
<div class="t" style="top:494.17px;font-size:18.7px;line-height:18.7px;font-weight:bold;color:#666;left:1456px;">TOTAL SERVICE RECORDS GROUP BY RMA</div>
<div class="t" style="top:545.96px;font-size:16px;line-height:16px;font-weight:normal;color:#111;letter-spacing:0.18px;left:1455px;">Total RMA In</div>
<div class="t" style="top:545.96px;font-size:16px;line-height:16px;font-weight:normal;color:#111;letter-spacing:0.18px;right:78px;">0</div>
<div class="t" style="top:572.56px;font-size:16px;line-height:16px;font-weight:normal;color:#111;letter-spacing:0.18px;left:1455px;">Total RMA In (Draft Material Stock In)</div>
<div class="t" style="top:572.56px;font-size:16px;line-height:16px;font-weight:normal;color:#111;letter-spacing:0.18px;right:78px;">0</div>
<div class="t" style="top:599.16px;font-size:16px;line-height:16px;font-weight:normal;color:#111;letter-spacing:0.18px;left:1455px;">Total RMA Out</div>
<div class="t" style="top:599.16px;font-size:16px;line-height:16px;font-weight:normal;color:#111;letter-spacing:0.18px;right:78px;">0</div>
<div class="t" style="top:625.76px;font-size:16px;line-height:16px;font-weight:normal;color:#111;letter-spacing:0.18px;left:1455px;">Total RMA Out (Draft Service Record)</div>
<div class="t" style="top:625.76px;font-size:16px;line-height:16px;font-weight:normal;color:#111;letter-spacing:0.18px;right:78px;">0</div>
<div class="r" style="left:1424px;top:690px;width:1063px;height:560px;background:#fff;"></div>
<div class="r" style="left:1443px;top:708px;width:1026px;height:47px;background:#e8e8e8;"></div>
<div class="t" style="top:722.17px;font-size:18.7px;line-height:18.7px;font-weight:bold;color:#666;left:1456px;">ANALYSIS REPORT - OVERDUE TICKETS (45 DAYS)</div>
<div class="t" style="top:774.46px;font-size:16px;line-height:16px;font-weight:bold;color:#111;letter-spacing:0.1px;left:1456px;">Document</div>
<div class="t" style="top:774.46px;font-size:16px;line-height:16px;font-weight:bold;color:#111;letter-spacing:0.1px;left:1593px;">Party</div>
<div class="t" style="top:774.46px;font-size:16px;line-height:16px;font-weight:bold;color:#111;letter-spacing:0.1px;left:2069px;">Call Type</div>
<div class="t" style="top:774.46px;font-size:16px;line-height:16px;font-weight:bold;color:#111;letter-spacing:0.1px;left:2207px;">Start Date</div>
<div class="t" style="top:774.46px;font-size:16px;line-height:16px;font-weight:bold;color:#111;letter-spacing:0.1px;left:2344px;">Overdue</div>
<div class="t" style="top:802.30px;font-size:15px;line-height:15px;font-weight:bold;color:#1a1a1a;letter-spacing:0.52px;left:1456px;">TK1025</div>
<div class="t" style="top:802.46px;font-size:16px;line-height:16px;font-weight:normal;color:#111;letter-spacing:0.18px;left:1592px;">DEKK Shipyard (Int'l) Ltd</div>
<div class="t" style="top:802.46px;font-size:16px;line-height:16px;font-weight:normal;color:#111;letter-spacing:0.18px;left:2206px;">11/12/2010</div>
<div class="t" style="top:802.46px;font-size:16px;line-height:16px;font-weight:normal;color:#111;letter-spacing:0.18px;left:2343px;">4395 Days</div>
<div class="t" style="top:831.80px;font-size:15px;line-height:15px;font-weight:bold;color:#1a1a1a;letter-spacing:0.52px;left:1456px;">TK1030</div>
<div class="t" style="top:831.96px;font-size:16px;line-height:16px;font-weight:normal;color:#111;letter-spacing:0.18px;left:1592px;">Algintons Print &amp; Graphics Pte Ltd</div>
<div class="t" style="top:831.96px;font-size:16px;line-height:16px;font-weight:normal;color:#111;letter-spacing:0.18px;left:2068px;">Email</div>
<div class="t" style="top:831.96px;font-size:16px;line-height:16px;font-weight:normal;color:#111;letter-spacing:0.18px;left:2206px;">05/12/2010</div>
<div class="t" style="top:831.96px;font-size:16px;line-height:16px;font-weight:normal;color:#111;letter-spacing:0.18px;left:2343px;">4401 Days</div>
<div class="t" style="top:861.30px;font-size:15px;line-height:15px;font-weight:bold;color:#1a1a1a;letter-spacing:0.52px;left:1456px;">TK1032</div>
<div class="t" style="top:861.46px;font-size:16px;line-height:16px;font-weight:normal;color:#111;letter-spacing:0.18px;left:1592px;">Aluminium Products Corporation Limited</div>
<div class="t" style="top:861.46px;font-size:16px;line-height:16px;font-weight:normal;color:#111;letter-spacing:0.18px;left:2068px;">Telephone</div>
<div class="t" style="top:861.46px;font-size:16px;line-height:16px;font-weight:normal;color:#111;letter-spacing:0.18px;left:2206px;">07/12/2010</div>
<div class="t" style="top:861.46px;font-size:16px;line-height:16px;font-weight:normal;color:#111;letter-spacing:0.18px;left:2343px;">4399 Days</div>
<div class="t" style="top:890.80px;font-size:15px;line-height:15px;font-weight:bold;color:#1a1a1a;letter-spacing:0.52px;left:1456px;">TK1046</div>
<div class="t" style="top:890.96px;font-size:16px;line-height:16px;font-weight:normal;color:#111;letter-spacing:0.18px;left:1592px;">Gemini Grains Pte Ltd</div>
<div class="t" style="top:890.96px;font-size:16px;line-height:16px;font-weight:normal;color:#111;letter-spacing:0.18px;left:2068px;">Telephone</div>
<div class="t" style="top:890.96px;font-size:16px;line-height:16px;font-weight:normal;color:#111;letter-spacing:0.18px;left:2206px;">19/12/2010</div>
<div class="t" style="top:890.96px;font-size:16px;line-height:16px;font-weight:normal;color:#111;letter-spacing:0.18px;left:2343px;">4387 Days</div>
<div class="t" style="top:920.30px;font-size:15px;line-height:15px;font-weight:bold;color:#1a1a1a;letter-spacing:0.52px;left:1456px;">TK1027</div>
<div class="t" style="top:920.46px;font-size:16px;line-height:16px;font-weight:normal;color:#111;letter-spacing:0.18px;left:1592px;">Algintons Print &amp; Graphics Pte Ltd</div>
<div class="t" style="top:920.46px;font-size:16px;line-height:16px;font-weight:normal;color:#111;letter-spacing:0.18px;left:2206px;">19/12/2010</div>
<div class="t" style="top:920.46px;font-size:16px;line-height:16px;font-weight:normal;color:#111;letter-spacing:0.18px;left:2343px;">4387 Days</div>
<div class="t" style="top:949.80px;font-size:15px;line-height:15px;font-weight:bold;color:#1a1a1a;letter-spacing:0.52px;left:1456px;">TK1053</div>
<div class="t" style="top:949.96px;font-size:16px;line-height:16px;font-weight:normal;color:#111;letter-spacing:0.18px;left:1592px;">Ace Equipment &amp; Trading Services Ltd</div>
<div class="t" style="top:949.96px;font-size:16px;line-height:16px;font-weight:normal;color:#111;letter-spacing:0.18px;left:2206px;">20/04/2021</div>
<div class="t" style="top:949.96px;font-size:16px;line-height:16px;font-weight:normal;color:#111;letter-spacing:0.18px;left:2343px;">612 Days</div>
<div class="t" style="top:979.30px;font-size:15px;line-height:15px;font-weight:bold;color:#1a1a1a;letter-spacing:0.52px;left:1456px;">TK1055</div>
<div class="t" style="top:979.46px;font-size:16px;line-height:16px;font-weight:normal;color:#111;letter-spacing:0.18px;left:1592px;">AA Advent Devices (Asia) Limited</div>
<div class="t" style="top:979.46px;font-size:16px;line-height:16px;font-weight:normal;color:#111;letter-spacing:0.18px;left:2068px;">Others</div>
<div class="t" style="top:979.46px;font-size:16px;line-height:16px;font-weight:normal;color:#111;letter-spacing:0.18px;left:2206px;">10/03/2021</div>
<div class="t" style="top:979.46px;font-size:16px;line-height:16px;font-weight:normal;color:#111;letter-spacing:0.18px;left:2343px;">653 Days</div>
<div class="t" style="top:1008.80px;font-size:15px;line-height:15px;font-weight:bold;color:#1a1a1a;letter-spacing:0.52px;left:1456px;">TK1022</div>
<div class="t" style="top:1008.96px;font-size:16px;line-height:16px;font-weight:normal;color:#111;letter-spacing:0.18px;left:1592px;">Analysis Devices, Inc</div>
<div class="t" style="top:1008.96px;font-size:16px;line-height:16px;font-weight:normal;color:#111;letter-spacing:0.18px;left:2206px;">06/11/2010</div>
<div class="t" style="top:1008.96px;font-size:16px;line-height:16px;font-weight:normal;color:#111;letter-spacing:0.18px;left:2343px;">4430 Days</div>
<div class="t" style="top:1038.30px;font-size:15px;line-height:15px;font-weight:bold;color:#1a1a1a;letter-spacing:0.52px;left:1456px;">TK1054</div>
<div class="t" style="top:1038.46px;font-size:16px;line-height:16px;font-weight:normal;color:#111;letter-spacing:0.18px;left:1592px;">AIG Asia Pacific Insurance Pte Ltd</div>
<div class="t" style="top:1038.46px;font-size:16px;line-height:16px;font-weight:normal;color:#111;letter-spacing:0.18px;left:2206px;">20/04/2021</div>
<div class="t" style="top:1038.46px;font-size:16px;line-height:16px;font-weight:normal;color:#111;letter-spacing:0.18px;left:2343px;">612 Days</div>
<div class="t" style="top:1067.80px;font-size:15px;line-height:15px;font-weight:bold;color:#1a1a1a;letter-spacing:0.52px;left:1456px;">TK1041</div>
<div class="t" style="top:1067.96px;font-size:16px;line-height:16px;font-weight:normal;color:#111;letter-spacing:0.18px;left:1592px;">CA Facilities Pte Ltd</div>
<div class="t" style="top:1067.96px;font-size:16px;line-height:16px;font-weight:normal;color:#111;letter-spacing:0.18px;left:2068px;">Messenging</div>
<div class="t" style="top:1067.96px;font-size:16px;line-height:16px;font-weight:normal;color:#111;letter-spacing:0.18px;left:2206px;">14/12/2010</div>
<div class="t" style="top:1067.96px;font-size:16px;line-height:16px;font-weight:normal;color:#111;letter-spacing:0.18px;left:2343px;">4392 Days</div>
<div class="t" style="top:1097.30px;font-size:15px;line-height:15px;font-weight:bold;color:#1a1a1a;letter-spacing:0.52px;left:1456px;">TK1021</div>
<div class="t" style="top:1097.46px;font-size:16px;line-height:16px;font-weight:normal;color:#111;letter-spacing:0.18px;left:1592px;">Aluminium Products Corporation Limited</div>
<div class="t" style="top:1097.46px;font-size:16px;line-height:16px;font-weight:normal;color:#111;letter-spacing:0.18px;left:2068px;">Email</div>
<div class="t" style="top:1097.46px;font-size:16px;line-height:16px;font-weight:normal;color:#111;letter-spacing:0.18px;left:2206px;">05/12/2010</div>
<div class="t" style="top:1097.46px;font-size:16px;line-height:16px;font-weight:normal;color:#111;letter-spacing:0.18px;left:2343px;">4401 Days</div>
<div class="t" style="top:1126.80px;font-size:15px;line-height:15px;font-weight:bold;color:#1a1a1a;letter-spacing:0.52px;left:1456px;">TK1026</div>
<div class="t" style="top:1126.96px;font-size:16px;line-height:16px;font-weight:normal;color:#111;letter-spacing:0.18px;left:1592px;">Algintons Print &amp; Graphics Pte Ltd</div>
<div class="t" style="top:1126.96px;font-size:16px;line-height:16px;font-weight:normal;color:#111;letter-spacing:0.18px;left:2206px;">15/12/2010</div>
<div class="t" style="top:1126.96px;font-size:16px;line-height:16px;font-weight:normal;color:#111;letter-spacing:0.18px;left:2343px;">4391 Days</div>
<div class="t" style="top:1156.30px;font-size:15px;line-height:15px;font-weight:bold;color:#1a1a1a;letter-spacing:0.52px;left:1456px;">TK1036</div>
<div class="t" style="top:1156.46px;font-size:16px;line-height:16px;font-weight:normal;color:#111;letter-spacing:0.18px;left:1592px;">Art N Craft Printing Pte Ltd</div>
<div class="t" style="top:1156.46px;font-size:16px;line-height:16px;font-weight:normal;color:#111;letter-spacing:0.18px;left:2068px;">Telephone</div>
<div class="t" style="top:1156.46px;font-size:16px;line-height:16px;font-weight:normal;color:#111;letter-spacing:0.18px;left:2206px;">09/12/2010</div>
<div class="t" style="top:1156.46px;font-size:16px;line-height:16px;font-weight:normal;color:#111;letter-spacing:0.18px;left:2343px;">4397 Days</div>
<div class="t" style="top:1185.80px;font-size:15px;line-height:15px;font-weight:bold;color:#1a1a1a;letter-spacing:0.52px;left:1456px;">TK1048</div>
<div class="t" style="top:1185.96px;font-size:16px;line-height:16px;font-weight:normal;color:#111;letter-spacing:0.18px;left:1592px;">CRC Metal Finishing Limited</div>
<div class="t" style="top:1185.96px;font-size:16px;line-height:16px;font-weight:normal;color:#111;letter-spacing:0.18px;left:2068px;">Telephone</div>
<div class="t" style="top:1185.96px;font-size:16px;line-height:16px;font-weight:normal;color:#111;letter-spacing:0.18px;left:2206px;">21/12/2010</div>
<div class="t" style="top:1185.96px;font-size:16px;line-height:16px;font-weight:normal;color:#111;letter-spacing:0.18px;left:2343px;">4385 Days</div>
<div class="t" style="top:1215.30px;font-size:15px;line-height:15px;font-weight:bold;color:#1a1a1a;letter-spacing:0.52px;left:1456px;">TK1044</div>
<div class="t" style="top:1215.46px;font-size:16px;line-height:16px;font-weight:normal;color:#111;letter-spacing:0.18px;left:1592px;">DEKK Shipyard (Int'l) Ltd</div>
<div class="t" style="top:1215.46px;font-size:16px;line-height:16px;font-weight:normal;color:#111;letter-spacing:0.18px;left:2068px;">Others</div>
<div class="t" style="top:1215.46px;font-size:16px;line-height:16px;font-weight:normal;color:#111;letter-spacing:0.18px;left:2206px;">17/12/2010</div>
<div class="t" style="top:1215.46px;font-size:16px;line-height:16px;font-weight:normal;color:#111;letter-spacing:0.18px;left:2343px;">4389 Days</div>
<div class="r" style="left:0px;top:1227px;width:2534px;height:5px;background:#efefef;"></div>
</body></html>
